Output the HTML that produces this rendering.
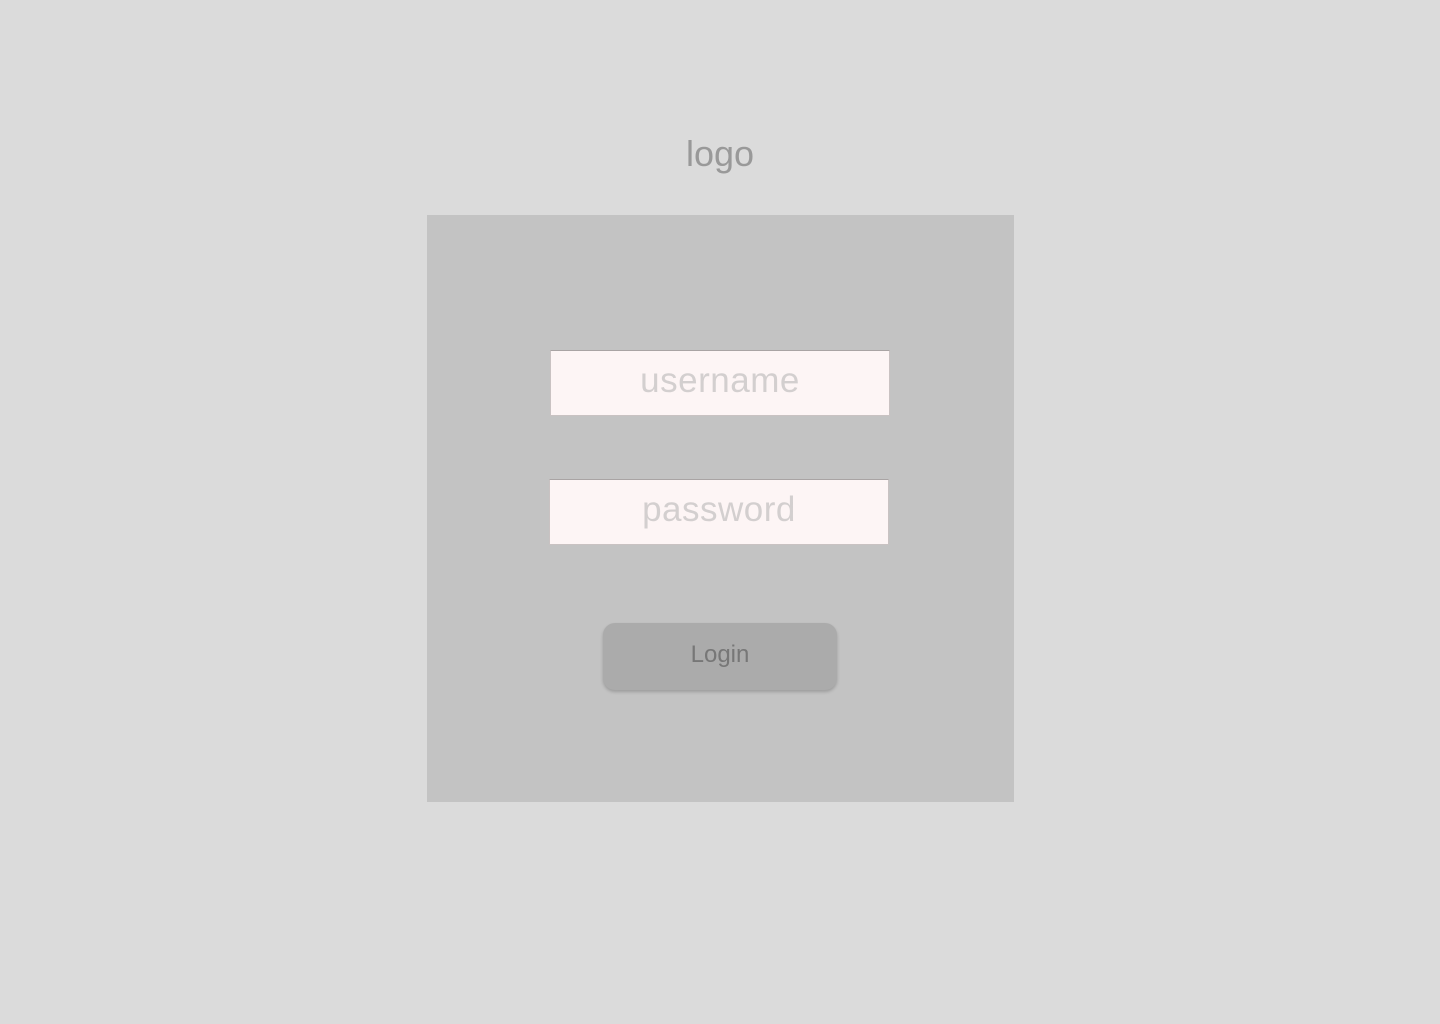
<!DOCTYPE html>
<html><head><style>
body{margin:0;width:1440px;height:1024px;background:#dbdbdb;position:relative;font-family:"Liberation Sans",sans-serif;overflow:hidden}
.logo{position:absolute;left:0;width:1440px;top:133px;text-align:center;font-size:36px;color:#999;}
.card{position:absolute;left:427px;top:215px;width:587px;height:587px;background:#c3c3c3}
.in{position:absolute;width:340px;height:66px;background:#fdf5f5;border:1px solid #c9c2c2;border-top-color:#a9a4a4;box-sizing:border-box;text-align:center;font-size:35px;line-height:60px;color:#d3cfcf;letter-spacing:0.5px}
.btn{position:absolute;left:603px;top:623px;width:234px;height:67px;background:#ababab;border-radius:12px;box-shadow:0 2px 3px rgba(0,0,0,.2);text-align:center;line-height:64px;font-size:24px;color:#777}
</style></head><body>
<div class="logo">logo</div>
<div class="card"></div>
<div class="in" style="left:550px;top:350px">username</div>
<div class="in" style="left:549px;top:479px">password</div>
<div class="btn">Login</div>
</body></html>
